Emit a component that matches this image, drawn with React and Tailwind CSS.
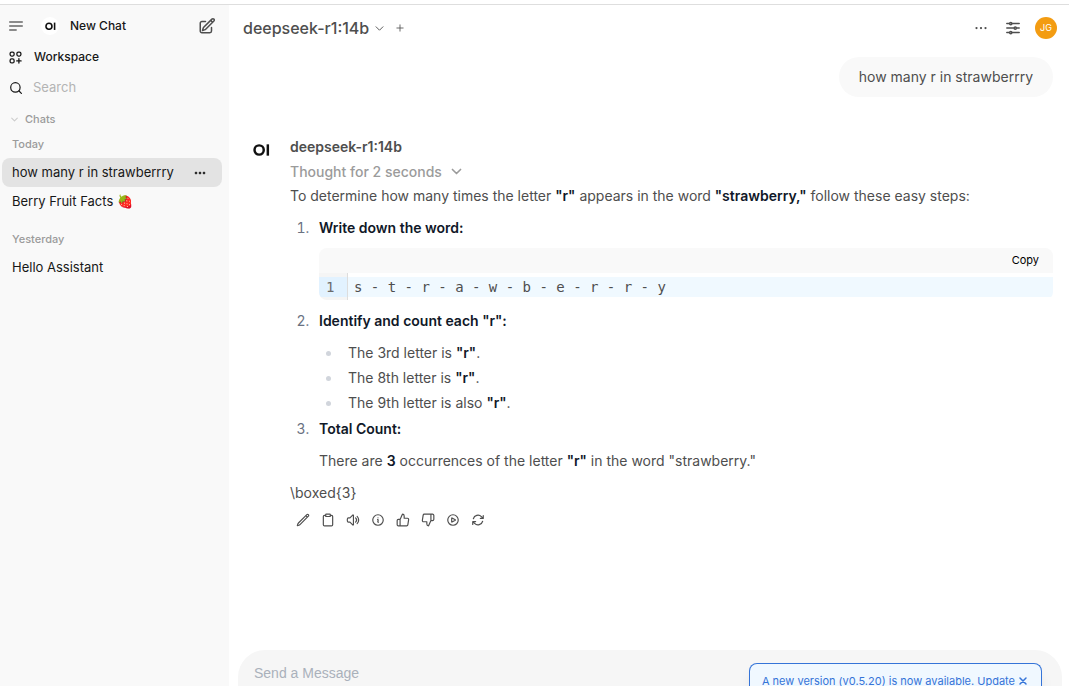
import {
    HiOutlinePencilSquare,
    HiOutlineChevronDown,
    HiOutlineEllipsisHorizontal,
    HiEllipsisHorizontal,
    HiOutlineAdjustmentsHorizontal,
    HiOutlinePlus,
    HiOutlinePencil,
    HiOutlineSpeakerWave,
    HiOutlineInformationCircle,
    HiOutlinePlayCircle,
    HiOutlineArrowPath,
    HiOutlineXMark
} from 'react-icons/hi2';
import { FiClipboard, FiThumbsUp, FiThumbsDown } from 'react-icons/fi';

const MODEL = 'deepseek-r1:14b';

const CHAT_GROUPS = [
    {
        label: 'Today',
        chats: [
            { title: 'how many r in strawberrry', active: true },
            { title: 'Berry Fruit Facts 🍓' }
        ]
    },
    { label: 'Yesterday', chats: [{ title: 'Hello Assistant' }] }
];

const ACTIONS = [
    { label: 'Edit', Icon: HiOutlinePencil },
    { label: 'Copy', Icon: FiClipboard },
    { label: 'Read aloud', Icon: HiOutlineSpeakerWave },
    { label: 'Info', Icon: HiOutlineInformationCircle },
    { label: 'Good response', Icon: FiThumbsUp },
    { label: 'Bad response', Icon: FiThumbsDown },
    { label: 'Continue', Icon: HiOutlinePlayCircle },
    { label: 'Regenerate', Icon: HiOutlineArrowPath }
];

function Logo({ className }) {
    return (
        <svg viewBox="0 0 18 14" className={className} fill="none" stroke="#111" strokeWidth="2.6" aria-hidden="true">
            <circle cx="6.5" cy="7" r="4.9" />
            <path d="M15.7 1v12" />
        </svg>
    );
}

function MenuIcon() {
    return (
        <svg viewBox="0 0 16 16" className="size-4" stroke="currentColor" strokeWidth="1.4" strokeLinecap="round" aria-hidden="true">
            <path d="M1.7 4h12.6M1.7 8h12.6M1.7 12h6.5" />
        </svg>
    );
}

function WorkspaceIcon() {
    return (
        <svg viewBox="0 0 15 15" className="size-[15px]" fill="none" stroke="currentColor" strokeWidth="1.3" strokeLinecap="round" aria-hidden="true">
            <rect x="2.1" y="2.1" width="4" height="4" rx="1.5" />
            <rect x="8.9" y="2.1" width="4" height="4" rx="1.5" />
            <rect x="2.1" y="8.9" width="4" height="4" rx="1.5" />
            <path d="M10.9 8.7v4.4M8.7 10.9h4.4" />
        </svg>
    );
}

function SearchIcon() {
    return (
        <svg viewBox="0 0 16 16" className="size-4" fill="none" stroke="currentColor" strokeWidth="1.2" strokeLinecap="round" aria-hidden="true">
            <circle cx="7.4" cy="7.4" r="4.7" />
            <path d="M11 11l2.4 2.4" />
        </svg>
    );
}

function Sidebar() {
    return (
        <aside className="w-[229px] shrink-0 bg-[#f9f9f9] text-[#171717]">
            <div className="flex h-[42px] items-center pl-2 pr-[13px]">
                <button aria-label="Toggle sidebar" className="text-[#676767]">
                    <MenuIcon />
                </button>
                <a href="#new" className="ml-[17px] flex grow items-center gap-[11px] text-xs font-medium">
                    <span className="flex size-[18px] items-center justify-center rounded-full bg-white">
                        <Logo className="w-[11px]" />
                    </span>
                    New Chat
                </a>
                <button aria-label="New chat" className="text-[#4e4e4e]">
                    <HiOutlinePencilSquare size={18} strokeWidth={2} />
                </button>
            </div>
            <a href="#workspace" className="flex h-5 items-center gap-[11px] pl-2 text-xs font-medium">
                <WorkspaceIcon />
                Workspace
            </a>
            <div className="mt-[5px] flex h-8 items-center gap-[9px] pl-2">
                <SearchIcon />
                <input
                    aria-label="Search"
                    placeholder="Search"
                    className="w-40 bg-transparent text-[13px] outline-none placeholder:text-[#b4b4b4]"
                />
            </div>
            <button className="mt-[5px] flex h-[21px] items-center gap-1.5 pl-2.5 text-[11px] font-medium text-[#9b9b9b]">
                <HiOutlineChevronDown size={9} strokeWidth={3} className="text-[#cdcdcd]" />
                Chats
            </button>
            {CHAT_GROUPS.map((group) => (
                <section key={group.label} className="mb-[9px] pl-0.5 pr-[7px]">
                    <h2 className="flex h-7 items-center pl-2.5 text-[11px] font-medium text-[#9b9b9b]">{group.label}</h2>
                    {group.chats.map((chat) => (
                        <div
                            key={chat.title}
                            className={`flex h-[29px] items-center rounded-lg pl-2.5 pr-3.5 text-[13px] ${chat.active ? 'bg-[#e3e3e3]' : ''}`}
                        >
                            <a href="#chat" className="grow whitespace-nowrap">{chat.title}</a>
                            {chat.active && (
                                <button aria-label="Chat menu">
                                    <HiEllipsisHorizontal size={16} strokeWidth={1} />
                                </button>
                            )}
                        </div>
                    ))}
                </section>
            ))}
        </aside>
    );
}

function Header() {
    return (
        <header className="flex h-[46px] shrink-0 items-center pl-3.5 pr-3 text-[#4e4e4e]">
            <button className="flex items-center gap-[5px] text-base font-medium">
                {MODEL}
                <HiOutlineChevronDown size={11} strokeWidth={2} />
            </button>
            <button aria-label="Add model" className="ml-2.5">
                <HiOutlinePlus size={10} strokeWidth={2} />
            </button>
            <button aria-label="More" className="ml-auto">
                <HiOutlineEllipsisHorizontal size={18} />
            </button>
            <button aria-label="Controls" className="ml-3.5">
                <HiOutlineAdjustmentsHorizontal size={18} strokeWidth={2} />
            </button>
            <button className="ml-[13px] flex size-[22px] items-center justify-center rounded-full bg-[#f39c12] text-[9px] text-white">
                JG
            </button>
        </header>
    );
}

function CodeBlock() {
    return (
        <div className="my-2 overflow-hidden rounded-lg">
            <div className="flex h-[25px] items-center justify-end bg-[#f9f9f9] pr-3.5">
                <button className="text-[11px] text-black">Copy</button>
            </div>
            <div className="flex font-['DejaVu_Sans_Mono',monospace] text-sm leading-5 text-[#4e4e4e]">
                <div className="w-[29px] border-r border-[#ddd] bg-[#f5f5f5] pb-[3px] pt-1 text-[#6c6c6c]">
                    <div className="bg-[#e2f2ff] pl-[7px]">1</div>
                </div>
                <div className="grow pb-[3px] pt-1">
                    <pre className="bg-[#f0f9ff] pl-1.5 font-['DejaVu_Sans_Mono',monospace]">s - t - r - a - w - b - e - r - r - y</pre>
                </div>
            </div>
        </div>
    );
}

function Strong({ children }) {
    return <strong className="font-semibold text-[#101828]">{children}</strong>;
}

function Answer() {
    return (
        <article className="flex pl-6 pr-4 pt-[38px]">
            <Logo className="mt-2 h-[14px] w-[17px] shrink-0" />
            <div className="ml-5 min-w-0 grow text-sm leading-[25px] text-[#4e4e4e]">
                <h1 className="font-semibold leading-6">{MODEL}</h1>
                <button className="flex h-6 items-center gap-2 font-medium text-[#9b9b9b]">
                    Thought for 2 seconds
                    <HiOutlineChevronDown size={13} strokeWidth={3} />
                </button>
                <p>
                    To determine how many times the letter <Strong>"r"</Strong> appears in the word <Strong>"strawberry,"</Strong> follow these easy steps:
                </p>
                <ol className="mt-[7px] list-decimal pl-[23px] marker:text-[#6a7282]">
                    <li className="pl-1.5">
                        <Strong>Write down the word:</Strong>
                        <CodeBlock />
                    </li>
                    <li className="pl-1.5">
                        <Strong>Identify and count each "r":</Strong>
                        <ul className="mb-px mt-[7px] list-disc pl-[23px] marker:text-[#d1d5dc]">
                            <li className="pl-1.5">The 3rd letter is <Strong>"r"</Strong>.</li>
                            <li className="pl-1.5">The 8th letter is <Strong>"r"</Strong>.</li>
                            <li className="pl-1.5">The 9th letter is also <Strong>"r"</Strong>.</li>
                        </ul>
                    </li>
                    <li className="pl-1.5">
                        <Strong>Total Count:</Strong>
                        <p className="mt-[7px]">
                            There are <Strong>3</Strong> occurrences of the letter <Strong>"r"</Strong> in the word "strawberry."
                        </p>
                    </li>
                </ol>
                <p className="mt-[7px]">{'\\boxed{3}'}</p>
                <div className="ml-1.5 mt-2 flex gap-[11px] text-[#4e4e4e]">
                    {ACTIONS.map(({ label, Icon }) => (
                        <button key={label} aria-label={label}>
                            <Icon size={14} strokeWidth={2} />
                        </button>
                    ))}
                </div>
            </div>
        </article>
    );
}

export default function App() {
    return (
        <div className="relative flex h-screen flex-col overflow-hidden bg-white pt-1 font-['Inter',sans-serif]">
            <div className="h-px shrink-0 bg-[#dedede]" />
            <div className="flex min-h-0 grow">
                <Sidebar />
                <main className="flex min-w-0 grow flex-col">
                    <Header />
                    <div className="min-h-0 grow overflow-hidden">
                        <div className="flex justify-end pr-4 pt-1.5">
                            <p className="rounded-3xl bg-[#f9f9f9] px-5 pb-2 pt-[7px] text-sm leading-[25px] text-[#4e4e4e]">
                                how many r in strawberrry
                            </p>
                        </div>
                        <Answer />
                    </div>
                    <form className="ml-[9px] mr-[7px] h-9 shrink-0 overflow-hidden rounded-t-[27px] bg-[#f6f6f6] px-4 pt-[11px]">
                        <textarea
                            aria-label="Message"
                            rows={1}
                            placeholder="Send a Message"
                            className="block w-full resize-none bg-transparent font-['Liberation_Sans',sans-serif] text-sm leading-6 outline-none placeholder:text-[#aab1bb]"
                        />
                    </form>
                </main>
            </div>
            {/* Update notice */}
            <div className="absolute bottom-0 right-[27px] flex h-[23px] items-start gap-0.5 rounded-t-lg border border-b-0 border-[#3574d8] bg-[#f0f8ff] px-3 pt-[9px] text-[11px] leading-4 text-[#3574d8] shadow-lg">
                <p className="whitespace-nowrap">
                    A new version (v0.5.20) is now available. <a href="#update">Update</a>
                </p>
                <button aria-label="Dismiss" className="pt-0.5">
                    <HiOutlineXMark size={12} strokeWidth={3} />
                </button>
            </div>
        </div>
    );
}
